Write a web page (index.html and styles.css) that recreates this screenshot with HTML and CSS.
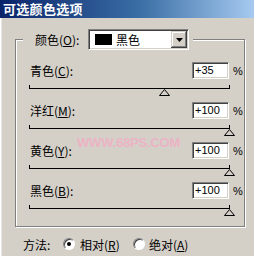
FILE: index.html
```html
<!DOCTYPE html>
<html>
<head>
<meta charset="utf-8">
<link rel="stylesheet" href="styles.css">
</head>
<body>
<div class="title">可选颜色选项</div>
<div class="client">
  <div class="group">
    <div class="legend">
      <span class="glabel">颜色(<u>O</u>):</span>
      <div class="combo">
        <span class="swatch"></span>
        <span class="ctext">黑色</span>
        <span class="cbtn"><svg width="7" height="4" viewBox="0 0 7 4"><polygon points="0,0 7,0 3.5,4" fill="#000"/></svg></span>
      </div>
    </div>
    <div class="rows">
      <div class="row">
        <div class="line1"><span class="lbl">青色(<u>C</u>):</span><span class="num">+35</span><span class="pct">%</span></div>
        <div class="slider"><span class="thumb" style="left:130px"><svg width="11" height="7" viewBox="0 0 11 7"><polygon points="5.5,0.5 10.5,6.5 0.5,6.5" fill="#d4d0c8" stroke="#000"/></svg></span></div>
      </div>
      <div class="row">
        <div class="line1"><span class="lbl">洋红(<u>M</u>):</span><span class="num">+100</span><span class="pct">%</span></div>
        <div class="slider"><span class="thumb" style="left:195px"><svg width="11" height="7" viewBox="0 0 11 7"><polygon points="5.5,0.5 10.5,6.5 0.5,6.5" fill="#d4d0c8" stroke="#000"/></svg></span></div>
      </div>
      <div class="row">
        <div class="line1"><span class="lbl">黄色(<u>Y</u>):</span><span class="num">+100</span><span class="pct">%</span></div>
        <div class="slider"><span class="thumb" style="left:195px"><svg width="11" height="7" viewBox="0 0 11 7"><polygon points="5.5,0.5 10.5,6.5 0.5,6.5" fill="#d4d0c8" stroke="#000"/></svg></span></div>
      </div>
      <div class="row">
        <div class="line1"><span class="lbl">黑色(<u>B</u>):</span><span class="num">+100</span><span class="pct">%</span></div>
        <div class="slider"><span class="thumb" style="left:195px"><svg width="11" height="7" viewBox="0 0 11 7"><polygon points="5.5,0.5 10.5,6.5 0.5,6.5" fill="#d4d0c8" stroke="#000"/></svg></span></div>
      </div>
    </div>
    <div class="watermark">WWW.68PS.COM</div>
  </div>
  <div class="method">
    <span class="mlabel">方法:</span>
    <span class="radio on"></span><span class="rtext">相对(<u>R</u>)</span>
    <span class="radio"></span><span class="rtext">绝对(<u>A</u>)</span>
  </div>
</div>
</body>
</html>
```
FILE: styles.css
```css
html, body {
  margin: 0;
  padding: 0;
}
body {
  width: 254px;
  height: 256px;
  overflow: hidden;
  background: #d4d0c8;
  font-family: "Noto Sans CJK SC", sans-serif;
  font-size: 12px;
  color: #000;
}
u {
  text-decoration: underline;
  text-underline-offset: 1px;
}
.title {
  height: 18px;
  line-height: 18px;
  padding-left: 3px;
  background: linear-gradient(to right, #0a246a 0%, #3a6ea5 55%, #a6caf0 100%);
  color: #fff;
  font-weight: bold;
  font-size: 13px;
  letter-spacing: 0.3px;
}
.client {
  height: 238px;
  box-sizing: border-box;
  padding: 21px 0 0 15px;
  box-shadow: inset 1px 0 #ffffff, inset 2px 0 #e8e6e2;
}
.group {
  position: relative;
  width: 230px;
  height: 188px;
  box-sizing: border-box;
  border: 1px solid #808080;
  box-shadow: inset 1px 1px #ffffff, 1px 1px #ffffff;
}
.legend {
  display: flex;
  align-items: center;
  margin: -11px 0 0 7px;
  width: 170px;
  height: 21px;
  box-sizing: border-box;
  padding-left: 12px;
  background: #d4d0c8;
}
.glabel {
  width: 53px;
  flex: none;
}
.combo {
  display: flex;
  align-items: center;
  width: 101px;
  height: 21px;
  box-sizing: border-box;
  border: 1px solid;
  border-color: #808080 #ffffff #ffffff #808080;
  box-shadow: inset 1px 1px #404040, inset -1px -1px #d4d0c8;
  background: #fff;
  padding: 1px;
}
.swatch {
  width: 17px;
  height: 11px;
  background: #000;
  margin-left: 5px;
  flex: none;
}
.ctext {
  margin-left: 4px;
}
.cbtn {
  margin-left: auto;
  width: 16px;
  height: 17px;
  box-sizing: border-box;
  background: #d4d0c8;
  box-shadow: inset -1px -1px #404040, inset 1px 1px #d4d0c8, inset -2px -2px #808080, inset 2px 2px #ffffff;
  display: flex;
  align-items: center;
  justify-content: center;
}
.cbtn svg {
  display: block;
}
.rows {
  margin-top: 12px;
}
.row {
  height: 40px;
}
.line1 {
  display: flex;
  align-items: center;
  height: 17px;
}
.lbl {
  width: 162px;
  padding-left: 14px;
  flex: none;
}
.num {
  width: 37px;
  height: 17px;
  box-sizing: border-box;
  flex: none;
  background: #fff;
  border: 1px solid;
  border-color: #808080 #ffffff #ffffff #808080;
  box-shadow: inset 1px 1px #404040, inset -1px -1px #d4d0c8;
  font-family: "Liberation Sans", Arial, sans-serif;
  font-size: 11px;
  line-height: 15px;
  padding-left: 2px;
}
.pct {
  margin-left: 4px;
  font-family: "Liberation Sans", Arial, sans-serif;
  font-size: 11px;
}
.slider {
  position: relative;
  margin: 9px 0 0 13px;
  width: 201px;
  height: 7px;
  border-top: 1px solid #000;
}
.slider::before,
.slider::after {
  content: "";
  position: absolute;
  top: -4px;
  width: 1px;
  height: 3px;
  background: #000;
}
.slider::before { left: 0; }
.slider::after { right: 0; }
.thumb {
  position: absolute;
  top: 0;
}
.thumb svg {
  display: block;
}
.watermark {
  position: absolute;
  left: 61px;
  top: 95px;
  font-family: "Liberation Sans", Arial, sans-serif;
  font-weight: bold;
  font-size: 13px;
  letter-spacing: -0.2px;
  color: #f4aac4;
  opacity: 0.75;
}
.method {
  display: flex;
  align-items: center;
  height: 16px;
  margin: 9px 0 0 8px;
}
.mlabel {
  width: 40px;
  flex: none;
}
.radio {
  width: 12px;
  height: 12px;
  box-sizing: border-box;
  flex: none;
  border-radius: 50%;
  border: 1px solid;
  border-color: #808080 #ffffff #ffffff #808080;
  box-shadow: inset 1px 1px #404040;
  background: #fff;
  display: flex;
  align-items: center;
  justify-content: center;
}
.radio.on::after {
  content: "";
  width: 4px;
  height: 4px;
  border-radius: 50%;
  background: #000;
}
.rtext {
  margin-left: 5px;
  width: 53px;
  flex: none;
}
.rtext:last-child {
  margin-left: 4px;
}
```
